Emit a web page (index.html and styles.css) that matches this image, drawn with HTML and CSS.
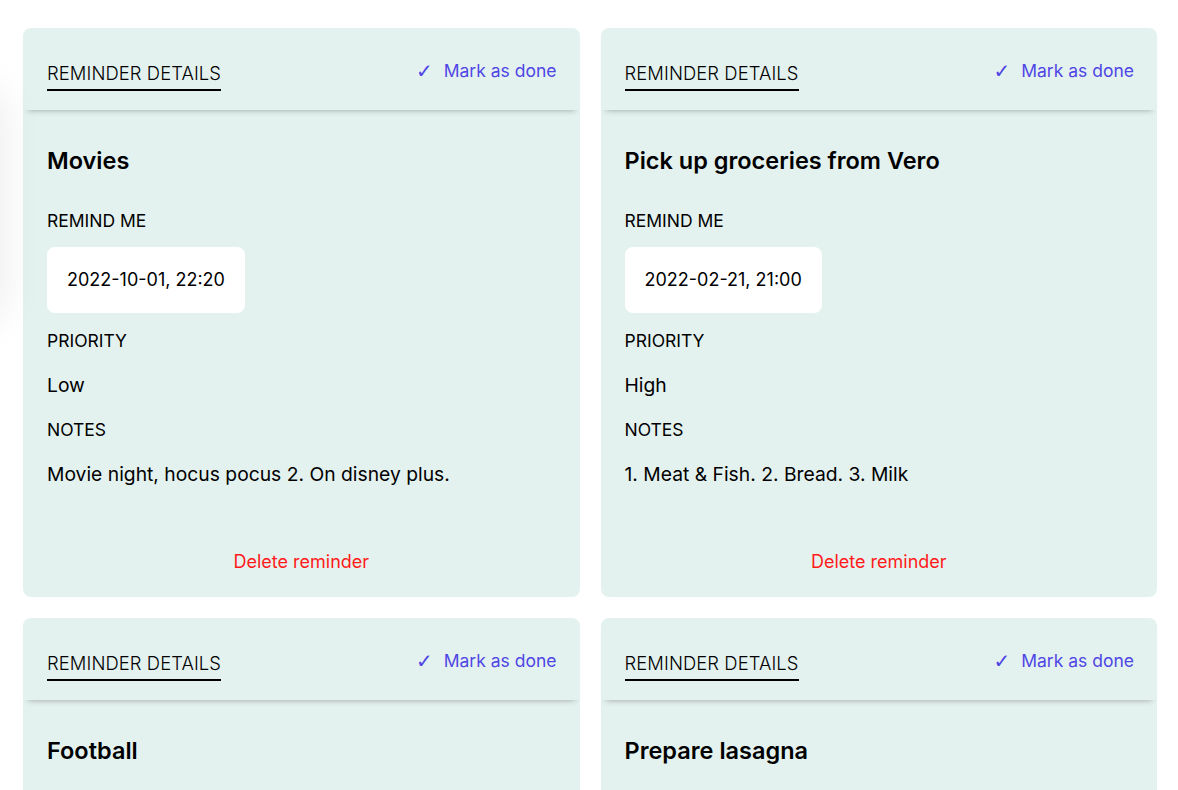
FILE: index.html
```html
<!DOCTYPE html>
<html lang="en">
<head>
<meta charset="utf-8">
<title>Reminders</title>
<link rel="stylesheet" href="styles.css">
</head>
<body>
<div class="edge-glow"></div>
<main class="grid">
  <section class="card">
    <header class="card-head">
      <h2 class="head-title">REMINDER DETAILS</h2>
      <a class="done" href="#"><span class="tick">✓</span>Mark as done</a>
    </header>
    <div class="card-body">
      <h3 class="title">Movies</h3>
      <p class="label">REMIND ME</p>
      <div class="date">2022-10-01, 22:20</div>
      <p class="label">PRIORITY</p>
      <p class="value">Low</p>
      <p class="label">NOTES</p>
      <p class="value">Movie night, hocus pocus 2. On disney plus.</p>
      <a class="delete" href="#">Delete reminder</a>
    </div>
  </section>
  <section class="card">
    <header class="card-head">
      <h2 class="head-title">REMINDER DETAILS</h2>
      <a class="done" href="#"><span class="tick">✓</span>Mark as done</a>
    </header>
    <div class="card-body">
      <h3 class="title">Pick up groceries from Vero</h3>
      <p class="label">REMIND ME</p>
      <div class="date">2022-02-21, 21:00</div>
      <p class="label">PRIORITY</p>
      <p class="value">High</p>
      <p class="label">NOTES</p>
      <p class="value">1. Meat &amp; Fish. 2. Bread. 3. Milk</p>
      <a class="delete" href="#">Delete reminder</a>
    </div>
  </section>
  <section class="card">
    <header class="card-head">
      <h2 class="head-title">REMINDER DETAILS</h2>
      <a class="done" href="#"><span class="tick">✓</span>Mark as done</a>
    </header>
    <div class="card-body">
      <h3 class="title">Football</h3>
    </div>
  </section>
  <section class="card">
    <header class="card-head">
      <h2 class="head-title">REMINDER DETAILS</h2>
      <a class="done" href="#"><span class="tick">✓</span>Mark as done</a>
    </header>
    <div class="card-body">
      <h3 class="title">Prepare lasagna</h3>
    </div>
  </section>
</main>
</body>
</html>
```
FILE: styles.css
```css
* { box-sizing: border-box; }
html, body { margin: 0; padding: 0; background: #ffffff; }
body {
  font-family: Inter, "Noto Sans", sans-serif;
  color: #000000;
  overflow: hidden;
  height: 790px;
}
.edge-glow {
  position: absolute;
  left: -60px;
  top: 90px;
  width: 60px;
  height: 230px;
  box-shadow: 0 0 40px 6px rgba(0,0,0,0.07);
  border-radius: 30px;
}
.grid {
  display: grid;
  grid-template-columns: 1fr 1fr;
  column-gap: 21px;
  row-gap: 21px;
  padding: 28px 21px 0 23px;
}
.card {
  background: #e4f2ef;
  border-radius: 8px;
  display: flex;
  flex-direction: column;
  min-height: 569px;
}
.card-head {
  height: 82px;
  display: flex;
  justify-content: space-between;
  align-items: flex-start;
  padding: 31px 23px 0 24px;
  box-shadow: 0 5px 6px -5px rgba(0,0,0,0.35);
  border-radius: 8px 8px 0 0;
}
.head-title {
  margin: 0;
  font-size: 18.4px;
  font-weight: 300;
  line-height: 28px;
  letter-spacing: 0.1px;
  padding-bottom: 2px;
  border-bottom: 2.5px solid #000;
}
.done {
  color: #4f46e5;
  text-decoration: none;
  font-size: 17.5px;
  font-weight: 400;
  line-height: 24px;
  display: flex;
  align-items: center;
}
.tick {
  font-family: "DejaVu Sans", sans-serif;
  font-size: 20px;
  line-height: 24px;
  margin-right: 11px;
  font-weight: 700;
}
.card-body {
  display: flex;
  flex-direction: column;
  align-items: flex-start;
  padding: 36px 24px 22px;
  flex: 1;
}
.title {
  margin: 0;
  font-size: 23.5px;
  font-weight: 600;
  line-height: 30px;
}
.label {
  margin: 17px 0 0;
  font-size: 17.5px;
  font-weight: 400;
  line-height: 27px;
}
.title + .label { margin-top: 31px; }
.value {
  margin: 18px 0 0;
  font-size: 19.3px;
  font-weight: 400;
  line-height: 27px;
}
.date {
  margin: 13px 0 0;
  background: #ffffff;
  border-radius: 8px;
  padding: 20px 20px;
  font-size: 18px;
  line-height: 26px;
  white-space: nowrap;
  height: 66px;
}
.date + .label { margin-top: 14px; }
.delete {
  align-self: center;
  margin-top: auto;
  color: #ff1a1a;
  text-decoration: none;
  font-size: 18px;
  font-weight: 400;
  line-height: 27px;
}
```
